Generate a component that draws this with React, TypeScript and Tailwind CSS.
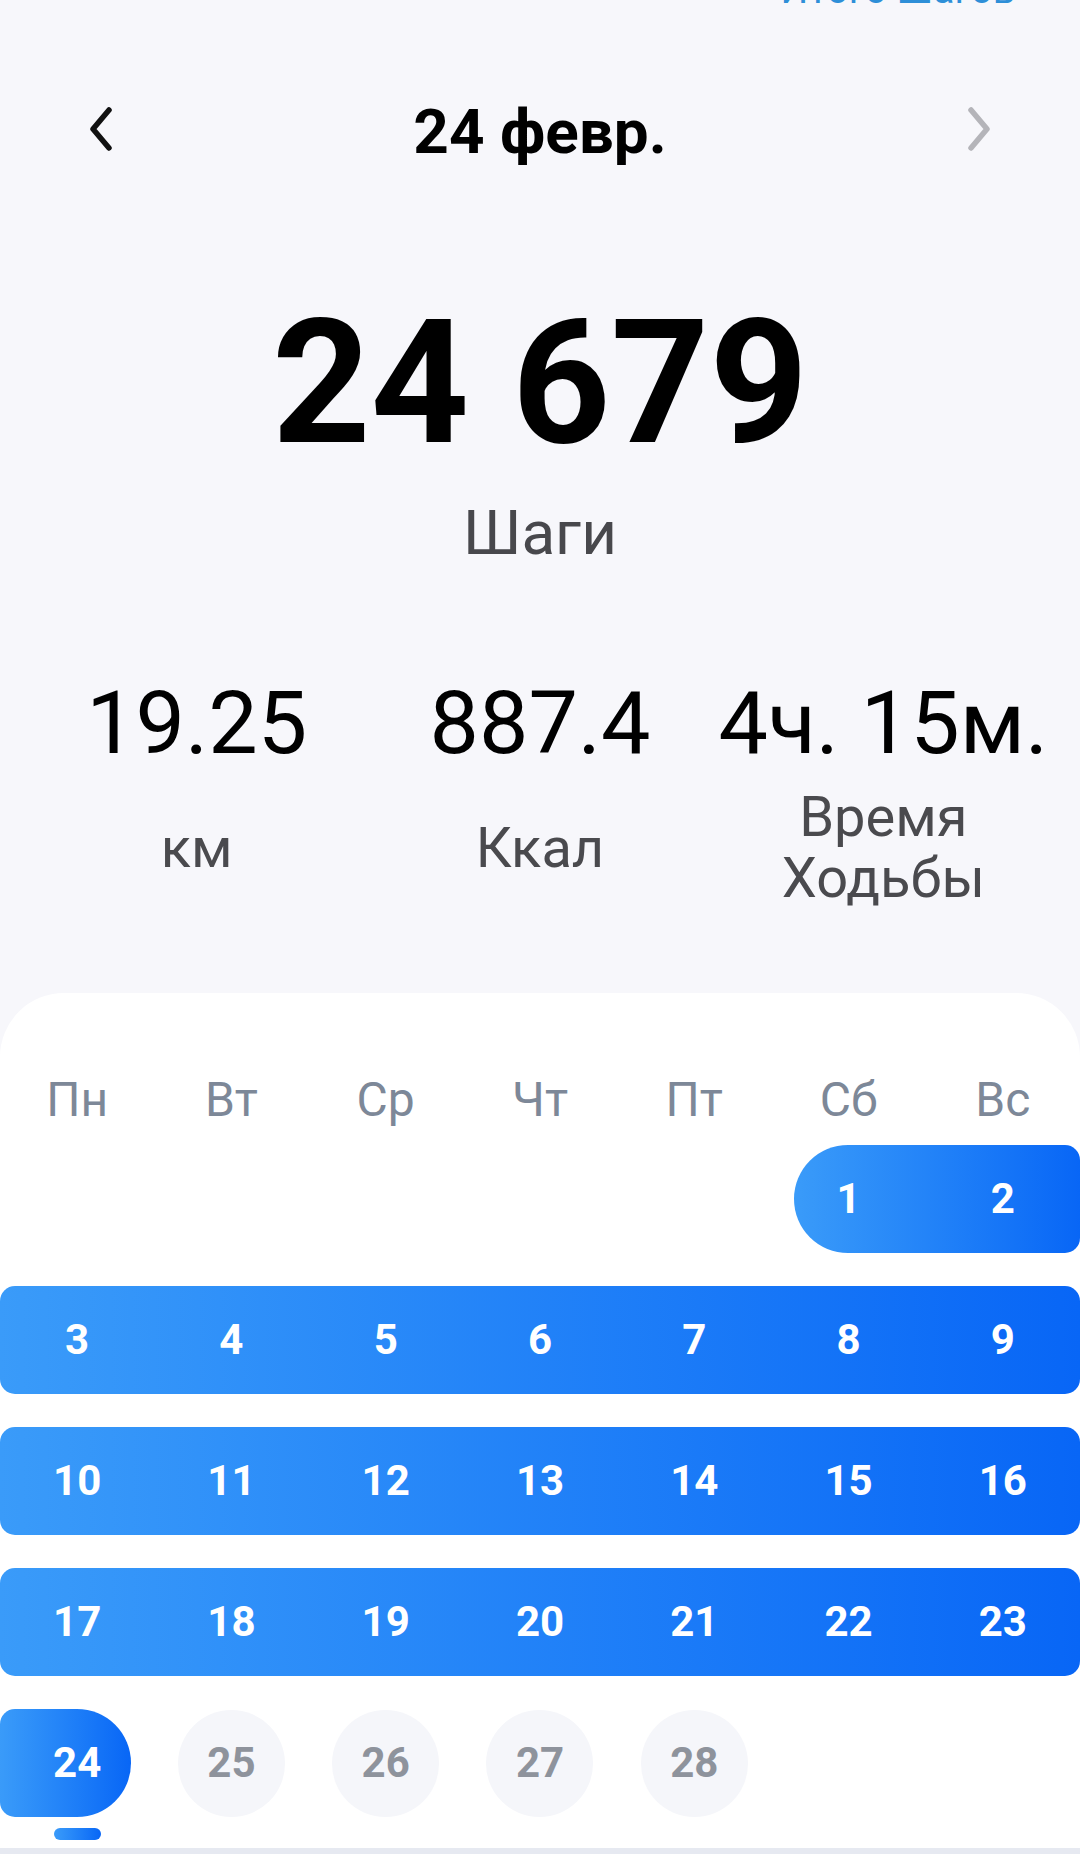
import React from "react";

const COL = ["col-start-1", "col-start-2", "col-start-3", "col-start-4", "col-start-5", "col-start-6", "col-start-7"];

function Num({ col, n, muted }: { col: number; n: number; muted?: boolean }) {
  if (muted) {
    return (
      <div className={`row-start-1 ${COL[col]} justify-self-center self-center w-[107px] h-[107px] rounded-full bg-[#f5f6fa] flex items-center justify-center text-[42px] font-bold leading-none text-[#8e939c]`}>
        {n}
      </div>
    );
  }
  return (
    <div className={`row-start-1 ${COL[col]} relative z-10 flex items-center justify-center text-[42px] font-bold leading-none text-white`}>
      {n}
    </div>
  );
}

export default function App() {
  const weekdays = ["Пн", "Вт", "Ср", "Чт", "Пт", "Сб", "Вс"];
  const grad = "bg-linear-to-r from-[#3a9bf9] to-[#0866f6]";
  return (
    <div className="w-[1080px] h-[1854px] overflow-hidden bg-[#f7f7fb] font-['Roboto',sans-serif] flex flex-col">
      <div className="h-[8px] overflow-hidden flex justify-end pr-[65px] shrink-0">
        <span className="-mt-[29px] text-[39px] leading-none text-[#2e8fd8] whitespace-nowrap">Итого Шагов</span>
      </div>

      <div className="mt-[93px] h-[62px] flex items-center justify-between px-[88px] shrink-0">
        <svg width="26" height="44" viewBox="0 0 26 44" className="mb-[6px]">
          <polyline points="21,3 5,22 21,41" fill="none" stroke="#111" strokeWidth="5.5" strokeLinecap="round" strokeLinejoin="round" />
        </svg>
        <span className="text-[62px] font-bold leading-none text-black">24 февр.</span>
        <svg width="26" height="44" viewBox="0 0 26 44" className="mb-[6px]">
          <polyline points="5,3 21,22 5,41" fill="none" stroke="#b4b4b9" strokeWidth="5.5" strokeLinecap="round" strokeLinejoin="round" />
        </svg>
      </div>

      <div className="mt-[134px] text-center text-[172px] font-bold leading-none text-black shrink-0">24 679</div>
      <div className="mt-[33px] text-center text-[62px] leading-none text-[#48484c] shrink-0">Шаги</div>

      <div className="mt-[115px] grid grid-cols-3 px-[25px] shrink-0">
        {[
          { v: "19.25", l: <>км</> },
          { v: "887.4", l: <>Ккал</> },
          { v: "4ч. 15м.", l: <>Время<br />Ходьбы</> },
        ].map((s, i) => (
          <div key={i} className="flex flex-col items-center">
            <div className="text-[88px] leading-none text-black whitespace-nowrap">{s.v}</div>
            <div className="mt-[20px] h-[122px] flex items-center justify-center text-center text-[56px] leading-[61px] text-[#4a4a4e]">
              <div>{s.l}</div>
            </div>
          </div>
        ))}
      </div>

      <div className="mt-[84px] flex-1 bg-white rounded-t-[64px] pt-[83px] flex flex-col">
        <div className="grid grid-cols-7 text-center text-[48px] leading-none text-[#7d8898]">
          {weekdays.map((d) => (
            <div key={d}>{d}</div>
          ))}
        </div>

        <div className="mt-[21px] flex flex-col gap-[33px]">
          <div className="grid grid-cols-7 h-[108px]">
            <div className={`row-start-1 col-start-6 col-span-2 ml-[23px] rounded-l-[54px] rounded-r-[15px] ${grad}`} />
            <Num col={5} n={1} />
            <Num col={6} n={2} />
          </div>
          {[3, 10, 17].map((start) => (
            <div key={start} className="grid grid-cols-7 h-[108px]">
              <div className={`row-start-1 col-start-1 col-span-7 rounded-[15px] ${grad}`} />
              {[0, 1, 2, 3, 4, 5, 6].map((i) => (
                <Num key={i} col={i} n={start + i} />
              ))}
            </div>
          ))}
          <div className="grid grid-cols-7 h-[108px]">
            <div className={`row-start-1 col-start-1 col-span-1 mr-[23px] rounded-l-[15px] rounded-r-[54px] ${grad}`} />
            <Num col={0} n={24} />
            {[25, 26, 27, 28].map((n, i) => (
              <Num key={n} col={i + 1} n={n} muted />
            ))}
          </div>
        </div>

        <div className="mt-[11px] grid grid-cols-7">
          <div className={`col-start-1 justify-self-center w-[47px] h-[12px] rounded-full ${grad}`} />
        </div>
      </div>
      <div className="h-[6px] bg-[#e6e9f1] shrink-0" />
    </div>
  );
}
